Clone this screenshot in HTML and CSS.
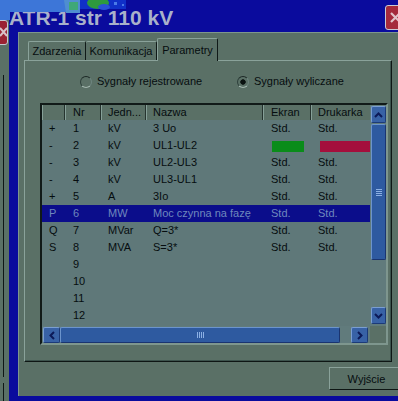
FILE: index.html
```html
<!DOCTYPE html>
<html lang="pl">
<head>
    <meta charset="UTF-8">
    <meta name="viewport" content="width=device-width, initial-scale=1.0">
    <title>ATR-1 str 110 kV</title>
    <link rel="stylesheet" href="styles.css">
</head>
<body>

<div class="screen">
    <!-- bits of the windows lying behind the dialog -->
    <div class="back-title">
        <svg width="130" height="20" viewBox="0 0 130 20">
            <path d="M0 0H66V12H10V20H0Z" fill="#3d76d8"/>
            <path d="M64 0H80V13H66Z" fill="#4f8ed0"/>
            <rect x="69" y="2" width="9" height="8" fill="#3fa878"/>
            <rect x="80" y="0" width="46" height="9" fill="#1030c8"/>
            <ellipse cx="98" cy="3" rx="11" ry="6" fill="#2e9a3e"/>
            <ellipse cx="104" cy="7" rx="6" ry="3" fill="#2a50d8"/>
            <rect x="114" y="2" width="3" height="3" fill="#4a7ae8"/>
            <rect x="122" y="4" width="2" height="2" fill="#4a7ae8"/>
        </svg>
    </div>
    <div class="back-close">
        <svg width="9" height="23" viewBox="0 0 9 23"><path d="M0 7L7 15M7 7L0 15" stroke="#d8c2c8" stroke-width="2"/></svg>
    </div>
    <div class="back-line upper"></div>
    <div class="back-line lower"></div>

    <div class="dialog">
        <div class="titlebar">
            <span class="title">ATR-1 str 110 kV</span>
            <span class="close">
                <svg width="13" height="13" viewBox="0 0 13 13"><path d="M2 2L11 11M11 2L2 11" stroke="#e0c4ca" stroke-width="2.2"/></svg>
            </span>
        </div>
        <div class="frame">
            <div class="client">
                <div class="tabs">
                    <div class="tab t-events">Zdarzenia</div>
                    <div class="tab t-comm">Komunikacja</div>
                    <div class="tab t-params active">Parametry</div>
                </div>

                <div class="panel">
                    <div class="radios">
                        <div class="radio first"><span class="dot"></span>Sygnały rejestrowane</div>
                        <div class="radio checked"><span class="dot"></span>Sygnały wyliczane</div>
                    </div>

                    <div class="list">
                        <div class="list-main">
                            <div class="row head">
                                <span></span><span class="c1">Nr</span><span>Jedn...</span><span>Nazwa</span><span class="c4">Ekran</span><span>Drukarka</span>
                            </div>
                            <div class="row"><span>+</span><span class="c1">1</span><span>kV</span><span>3 Uo</span><span class="c4">Std.</span><span>Std.</span></div>
                            <div class="row"><span>-</span><span class="c1">2</span><span>kV</span><span>UL1-UL2</span><span class="c4"><i class="swatch green"></i></span><span><i class="swatch red"></i></span></div>
                            <div class="row"><span>-</span><span class="c1">3</span><span>kV</span><span>UL2-UL3</span><span class="c4">Std.</span><span>Std.</span></div>
                            <div class="row"><span>-</span><span class="c1">4</span><span>kV</span><span>UL3-UL1</span><span class="c4">Std.</span><span>Std.</span></div>
                            <div class="row"><span>+</span><span class="c1">5</span><span>A</span><span>3Io</span><span class="c4">Std.</span><span>Std.</span></div>
                            <div class="row sel"><span>P</span><span class="c1">6</span><span>MW</span><span>Moc czynna na fazę</span><span class="c4">Std.</span><span>Std.</span></div>
                            <div class="row"><span>Q</span><span class="c1">7</span><span>MVar</span><span>Q=3*</span><span class="c4">Std.</span><span>Std.</span></div>
                            <div class="row"><span>S</span><span class="c1">8</span><span>MVA</span><span>S=3*</span><span class="c4">Std.</span><span>Std.</span></div>
                            <div class="row"><span></span><span class="c1">9</span><span></span><span></span><span></span><span></span></div>
                            <div class="row"><span></span><span class="c1">10</span><span></span><span></span><span></span><span></span></div>
                            <div class="row"><span></span><span class="c1">11</span><span></span><span></span><span></span><span></span></div>
                            <div class="row"><span></span><span class="c1">12</span><span></span><span></span><span></span><span></span></div>
                        </div>

                        <div class="vscroll">
                            <div class="arrow">
                                <svg width="9" height="6" viewBox="0 0 9 6"><path d="M1 5L4.5 1.5L8 5" fill="none" stroke="#0c1a58" stroke-width="2"/></svg>
                            </div>
                            <div class="thumb thumb-v">
                                <svg width="6" height="7" viewBox="0 0 6 7"><path d="M0 .5H6M0 2.5H6M0 4.5H6M0 6.5H6" stroke="#8cb0e4"/></svg>
                            </div>
                            <div class="track"></div>
                            <div class="arrow">
                                <svg width="9" height="6" viewBox="0 0 9 6"><path d="M1 1L4.5 4.5L8 1" fill="none" stroke="#0c1a58" stroke-width="2"/></svg>
                            </div>
                        </div>

                        <div class="hscroll">
                            <div class="arrow">
                                <svg width="6" height="9" viewBox="0 0 6 9"><path d="M5 1L1.5 4.5L5 8" fill="none" stroke="#0c1a58" stroke-width="2"/></svg>
                            </div>
                            <div class="thumb thumb-h">
                                <svg width="7" height="6" viewBox="0 0 7 6"><path d="M.5 0V6M2.5 0V6M4.5 0V6M6.5 0V6" stroke="#8cb0e4"/></svg>
                            </div>
                            <div class="track"></div>
                            <div class="arrow">
                                <svg width="6" height="9" viewBox="0 0 6 9"><path d="M1 1L4.5 4.5L1 8" fill="none" stroke="#0c1a58" stroke-width="2"/></svg>
                            </div>
                        </div>
                        <div class="corner"></div>
                    </div>
                </div>

                <button type="button" class="btn">Wyjście</button>
            </div>
        </div>
    </div>
</div>

</body>
</html>
```

FILE: styles.css
```css
* {
    box-sizing: border-box;
}

body {
    margin: 0;
    font-family: "Liberation Sans", Arial, sans-serif;
    font-size: 11px;
    color: #060d0f;
    background: #5a7066;
    overflow: hidden;
}

.screen {
    position: relative;
    width: 398px;
    height: 401px;
    overflow: hidden;
    background: #5a7066;
}

/* windows behind the dialog */
.back-title {
    position: absolute;
    left: 0;
    top: 0;
    z-index: 2;
    line-height: 0;
}

.back-close {
    position: absolute;
    left: -3px;
    top: 20px;
    width: 11px;
    height: 25px;
    padding-left: 2px;
    background: #9a2232;
    border: 1px solid #c4c8d0;
    border-radius: 3px;
    line-height: 0;
}

.back-line {
    position: absolute;
    left: 3px;
    width: 1px;
    background: #0e1614;
}

.back-line.upper {
    top: 75px;
    height: 302px;
}

.back-line.lower {
    top: 383px;
    height: 18px;
}

/* dialog window */
.dialog {
    position: absolute;
    left: 9px;
    top: -12px;
    width: 400px;
    height: 413px;
    display: flex;
    flex-direction: column;
    background: #0a0b9d;
}

.titlebar {
    height: 44px;
    display: flex;
    align-items: flex-start;
    padding-top: 18px;
}

.title {
    font-size: 21px;
    font-weight: bold;
    line-height: 24px;
    color: #a9b1ca;
}

.close {
    margin-left: auto;
    margin-right: 3px;
    margin-top: -1px;
    width: 21px;
    height: 25px;
    display: flex;
    align-items: center;
    justify-content: center;
    background: #a42a3c;
    border: 1px solid #c8cad4;
    border-radius: 3px;
}

.frame {
    flex: 1;
    display: flex;
    padding: 0 0 5px 9px;
}

.client {
    flex: 1;
    background: #5a7066;
    border-top: 1px solid #7e968e;
    border-left: 1px solid #7e968e;
    padding: 5px 0 0 5px;
}

/* tabs */
.tabs {
    display: flex;
    align-items: flex-end;
    height: 22px;
    padding-left: 4px;
}

.tab {
    height: 19px;
    padding-top: 2px;
    line-height: 14px;
    text-align: center;
    border: 1px solid #8aa29a;
    border-bottom: none;
    border-right-color: #101a18;
    border-radius: 2px 2px 0 0;
}

.t-events {
    width: 58px;
}

.t-comm {
    width: 71px;
    border-left: none;
}

.t-params {
    width: 61px;
}

.tab.active {
    position: relative;
    z-index: 1;
    height: 23px;
    margin-bottom: -1px;
    padding-top: 4px;
    background: #5a7066;
}

.panel {
    width: 368px;
    height: 302px;
    border: 1px solid #8aa29a;
    border-right-color: #0e1614;
    border-bottom-color: #0e1614;
    box-shadow: inset -1px -1px #3c524c;
}

/* radio buttons */
.radios {
    display: flex;
    height: 13px;
    margin: 14px 0 0 55px;
    line-height: 13px;
}

.radio {
    display: flex;
    align-items: center;
    gap: 5px;
    white-space: nowrap;
}

.radio.first {
    width: 157px;
}

.dot {
    width: 12px;
    height: 12px;
    border-radius: 50%;
    border: 1px solid;
    border-color: #1c2826 #6e8680 #a2b6ae #2e403c;
    background: #5a7066;
}

.radio.checked .dot {
    background: radial-gradient(circle, #0a1210 0 2.4px, #5a7066 3px);
}

/* list view */
.list {
    display: grid;
    grid-template-columns: 328px 16px;
    grid-template-rows: 221px 17px;
    width: 348px;
    margin: 15px 0 0 15px;
    border: 2px solid;
    border-color: #111a18 #7e968e #7e968e #111a18;
    background: #5f7879;
}

.list-main {
    overflow: hidden;
}

.row {
    display: grid;
    grid-template-columns: 23px 36px 45px 117px 48px 80px;
    height: 17px;
    line-height: 17px;
    white-space: nowrap;
}

.row span {
    padding-left: 7px;
    overflow: hidden;
}

.row .c1,
.row .c4 {
    padding-left: 8px;
}

.row.head {
    height: 15px;
    line-height: 15px;
    background: #5a7066;
}

.head span {
    border-right: 1px solid #26342f;
    box-shadow: inset 1px 0 #86a098;
}

.row.sel {
    background: #0b0d8b;
    color: #6f88bd;
}

.swatch {
    display: block;
    height: 11px;
    margin-top: 4px;
}

.swatch.green {
    width: 32px;
    margin-left: 1px;
    background: #0a8c1a;
}

.swatch.red {
    width: 60px;
    margin-left: 2px;
    background: #a40f3c;
}

/* scroll bars */
.vscroll {
    display: flex;
    flex-direction: column;
    padding: 1px 0 2px 1px;
    background: #617b7c;
}

.arrow {
    width: 15px;
    height: 17px;
    display: flex;
    align-items: center;
    justify-content: center;
    background: #3862a6;
    border: 1px solid #7a9ed2;
    border-right-color: #1c3a78;
    border-bottom-color: #1c3a78;
    border-radius: 2px;
}

.thumb {
    display: flex;
    align-items: center;
    justify-content: center;
    background: #2e5aa0;
    border: 1px solid #6c94cc;
    border-right-color: #1a3470;
    border-bottom-color: #1a3470;
    border-radius: 2px;
}

.thumb-v {
    height: 136px;
    margin-top: 1px;
}

.track {
    flex: 1;
}

.hscroll {
    display: flex;
    padding: 1px 2px 0 1px;
    background: #617b7c;
}

.hscroll .arrow {
    width: 17px;
    height: 16px;
}

.thumb-h {
    width: 280px;
}

.corner {
    background: #5a7066;
}

/* footer button */
.btn {
    display: block;
    width: 75px;
    height: 23px;
    margin: 5px 0 0 305px;
    padding: 0;
    font-family: "Liberation Sans", Arial, sans-serif;
    font-size: 11px;
    color: #060d0f;
    background: #5a7066;
    border: 1px solid;
    border-color: #8aa29a #0e1614 #0e1614 #8aa29a;
}
```
